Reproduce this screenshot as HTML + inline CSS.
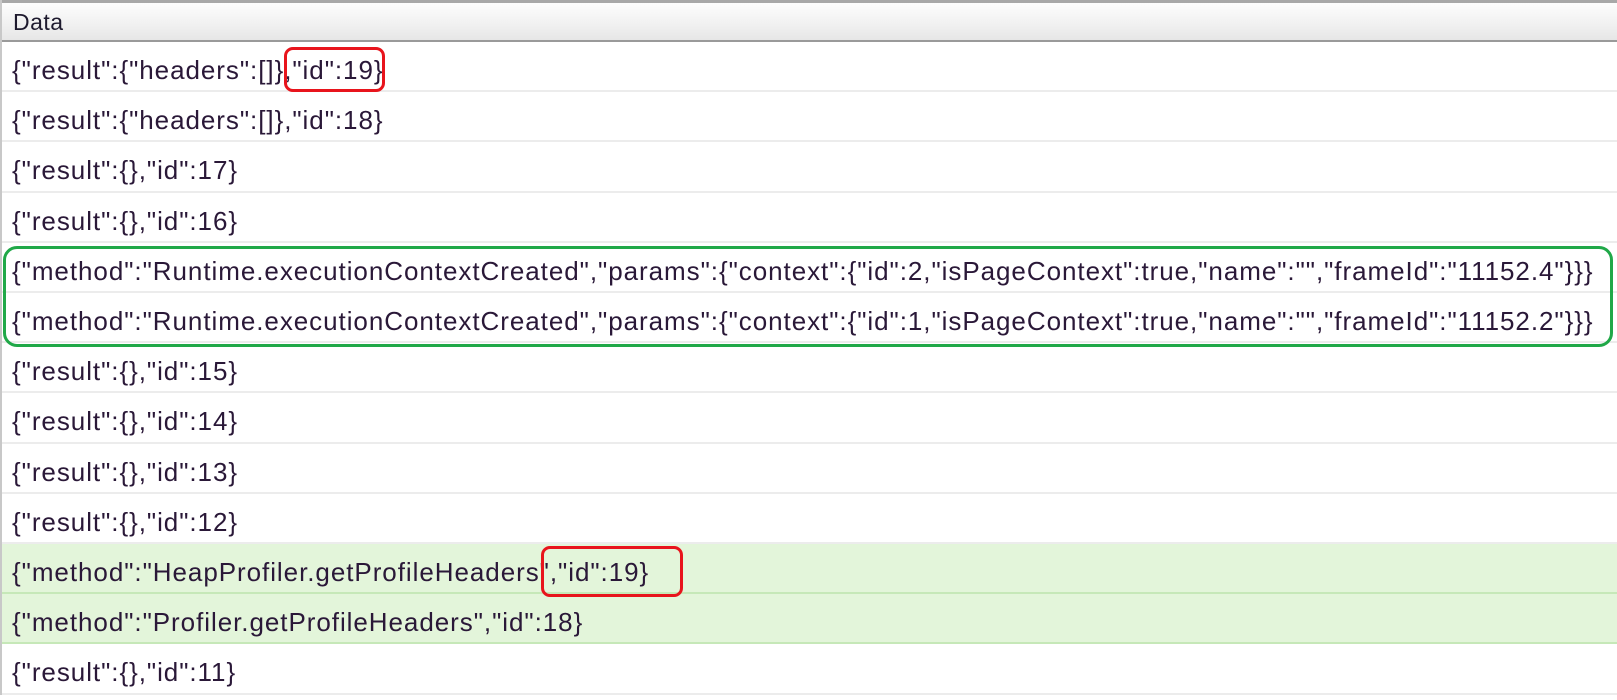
<!DOCTYPE html>
<html><head><meta charset="utf-8"><style>
body{margin:0;width:1617px;height:695px;overflow:hidden;background:#fff;font-family:"Liberation Sans",sans-serif;position:relative}
.hdr{position:absolute;left:0;top:0;width:1617px;height:42px;border-top:3px solid #a8a8a8;box-sizing:border-box;background:linear-gradient(#fdfdfd,#f0f0f0 60%,#e6e6e6);border-bottom:2px solid #9a9a9a}
.hdr span{position:absolute;left:13px;top:6px;font-size:23px;letter-spacing:0.5px;color:#1e1a2e}
.lb{position:absolute;left:0;top:0;width:2px;height:695px;background:#c8c8c8}
.row{position:absolute;left:0;width:1617px;height:50.2px;border-bottom:2px solid #ececec;box-sizing:border-box;font-size:26px;letter-spacing:0.95px;color:#2a1838;line-height:56px;padding-left:12px;white-space:nowrap}
.g{background:#e3f5da;border-bottom-color:#c6e8b8}
.box{position:absolute;box-sizing:border-box}
</style></head><body>
<div class="hdr"><span>Data</span></div>
<div class="row" style="top:42px">{"result":{"headers":[]},"id":19}</div>
<div class="row" style="top:92.2px">{"result":{"headers":[]},"id":18}</div>
<div class="row" style="top:142.4px">{"result":{},"id":17}</div>
<div class="row" style="top:192.6px">{"result":{},"id":16}</div>
<div class="row" style="top:242.8px">{"method":"Runtime.executionContextCreated","params":{"context":{"id":2,"isPageContext":true,"name":"","frameId":"11152.4"}}}</div>
<div class="row" style="top:293px">{"method":"Runtime.executionContextCreated","params":{"context":{"id":1,"isPageContext":true,"name":"","frameId":"11152.2"}}}</div>
<div class="row" style="top:343.2px">{"result":{},"id":15}</div>
<div class="row" style="top:393.4px">{"result":{},"id":14}</div>
<div class="row" style="top:443.6px">{"result":{},"id":13}</div>
<div class="row" style="top:493.8px">{"result":{},"id":12}</div>
<div class="row g" style="top:544px">{"method":"HeapProfiler.getProfileHeaders","id":19}</div>
<div class="row g" style="top:594.2px">{"method":"Profiler.getProfileHeaders","id":18}</div>
<div class="row" style="top:644.4px">{"result":{},"id":11}</div>
<div class="lb"></div>
<div class="box" style="left:284px;top:47px;width:101px;height:45px;border:3px solid #e8141c;border-radius:9px"></div>
<div class="box" style="left:541px;top:546px;width:142px;height:51px;border:3px solid #e8141c;border-radius:9px"></div>
<div class="box" style="left:3px;top:246px;width:1610px;height:101px;border:3px solid #20a848;border-radius:14px"></div>
</body></html>
